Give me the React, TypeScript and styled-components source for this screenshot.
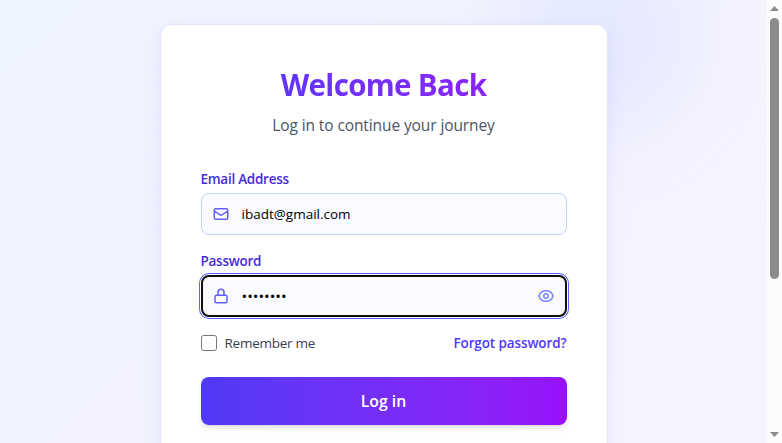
import React from "react";
import styled, { createGlobalStyle } from "styled-components";

const GlobalStyle = createGlobalStyle`
  * { box-sizing: border-box; }
  body { margin: 0; overflow: hidden; font-family: "Open Sans", "Noto Sans", sans-serif; }
`;

const Window = styled.div`
  display: flex;
  height: 443px;
  overflow: hidden;
`;

const Page = styled.main`
  position: relative;
  flex: 1;
  height: 697px;
  display: flex;
  justify-content: center;
  align-items: flex-start;
  padding-top: 24px;
  overflow: hidden;
  background: linear-gradient(to bottom right in oklab, #eef4ff, #f1f3ff 28%, #f5f3ff 55%, #faf5ff);
`;

const Glow = styled.div`
  position: absolute;
  top: -56px;
  left: 504px;
  width: 192px;
  height: 192px;
  border-radius: 50%;
  background: #c6d2ff;
  opacity: 0.28;
  filter: blur(36px);
`;

const Card = styled.form`
  position: relative;
  width: 448px;
  height: 649px;
  display: flex;
  flex-direction: column;
  padding: 40px;
  background: #fff;
  border: 1px solid #e0e7ff;
  border-radius: 12px;
  box-shadow: 0 10px 25px rgba(79, 57, 246, 0.05), 0 2px 10px rgba(79, 57, 246, 0.04);
`;

const Title = styled.h1`
  align-self: center;
  width: 366px;
  margin: 0;
  text-align: center;
  font-size: 29.5px;
  line-height: 40px;
  font-weight: 700;
  letter-spacing: -0.65px;
  color: transparent;
  background: linear-gradient(to right in oklab, #4f39f6, #9810fa);
  background-clip: text;
`;

const Subtitle = styled.p`
  margin: 8px 0 32px;
  text-align: center;
  font-size: 15.5px;
  line-height: 25px;
  height: 24px;
  letter-spacing: -0.1px;
  color: #4a5565;
`;

const Field = styled.div`
  display: flex;
  flex-direction: column;
  margin-bottom: 16px;
`;

const Label = styled.label`
  font-size: 13.5px;
  line-height: 20px;
  font-weight: 600;
  letter-spacing: -0.27px;
  color: #432dd7;
  margin-bottom: 4px;
`;

const InputBox = styled.div<{ $focused?: boolean }>`
  display: flex;
  align-items: center;
  height: 42px;
  padding: 0 11px 0 10px;
  gap: 12px;
  border-radius: 8px;
  border: 1px solid #c6d2ff;
  background: #f9fbff;
  color: #615fff;
  ${(p) =>
    p.$focused &&
    `border: 2px solid #101010; padding: 0 10px 0 9px; box-shadow: 0 0 0 1px #fff, 0 0 0 2px #615fff;`}
`;

const Input = styled.input`
  flex: 1;
  min-width: 0;
  height: 20px;
  padding: 0;
  border: 0;
  outline: 0;
  background: transparent;
  font: 13.5px "Open Sans", sans-serif;
  color: #000;
  &[type="password"] {
    font-size: 15px;
  }
`;

const Options = styled.div`
  display: flex;
  align-items: center;
  justify-content: space-between;
  height: 20px;
  margin-bottom: 24px;
  font-size: 13.5px;
`;

const Remember = styled.label`
  display: flex;
  align-items: center;
  gap: 8px;
  letter-spacing: -0.26px;
  color: #364153;
`;

const Checkbox = styled.input`
  appearance: none;
  width: 16px;
  height: 16px;
  margin: 0;
  border: 1px solid #767676;
  border-radius: 2.5px;
  background: #fff;
`;

const Forgot = styled.a`
  font-weight: 600;
  letter-spacing: -0.11px;
  color: #4f39f6;
`;

const Submit = styled.button`
  height: 48px;
  border: 0;
  border-radius: 8px;
  background: linear-gradient(to right in oklab, #4f39f6, #9810fa);
  box-shadow: 0 4px 6px -1px rgba(0, 0, 0, 0.1), 0 2px 4px -2px rgba(0, 0, 0, 0.1);
  color: #fff;
  font: 600 15.75px "Open Sans", sans-serif;
`;

const Scrollbar = styled.div`
  width: 15px;
  display: flex;
  flex-direction: column;
  align-items: center;
  padding: 6px 0 6px;
  background: #fcfcfc;
`;

const Thumb = styled.div`
  width: 9px;
  height: 261px;
  margin: 7px 0 auto;
  border-radius: 5px;
  background: #8b8b8b;
`;

const IconSvg = styled.svg<{ $muted?: boolean }>`
  flex: none;
  width: 18px;
  height: 18px;
  color: ${(p) => (p.$muted ? "#7c86ff" : "#615fff")};
`;

const Arrow = ({ down }: { down?: boolean }) => (
  <svg width="9" height="5" viewBox="0 0 9 5" fill="#8b8b8b">
    <path d={down ? "M0 0h9L4.5 5z" : "M0 5h9L4.5 0z"} />
  </svg>
);

const Icon = ({ paths, muted }: { paths: string[]; muted?: boolean }) => (
  <IconSvg $muted={muted} viewBox="0 0 24 24" fill="none" stroke="currentColor"
    strokeWidth="2" strokeLinecap="round" strokeLinejoin="round">
    {paths.map((d) => (
      <path key={d} d={d} />
    ))}
  </IconSvg>
);

const mail = [
  "M3 8l7.89 5.26a2 2 0 002.22 0L21 8M5 19h14a2 2 0 002-2V7a2 2 0 00-2-2H5a2 2 0 00-2 2v10a2 2 0 002 2z",
];
const lock = ["M6 21h12a2 2 0 002-2v-6a2 2 0 00-2-2H6a2 2 0 00-2 2v6a2 2 0 002 2zM16 11V7a4 4 0 00-8 0v4"];
const eye = [
  "M15 12a3 3 0 11-6 0 3 3 0 016 0z",
  "M2.458 12C3.732 7.943 7.523 5 12 5c4.478 0 8.268 2.943 9.542 7-1.274 4.057-5.064 7-9.542 7-4.477 0-8.268-2.943-9.542-7z",
];

export default function App() {
  return (
    <Window>
      <GlobalStyle />
      <Page>
        <Glow />
        <Card>
          <Title>Welcome Back</Title>
          <Subtitle>Log in to continue your journey</Subtitle>
          <Field>
            <Label htmlFor="email">Email Address</Label>
            <InputBox>
              <Icon paths={mail} />
              <Input id="email" type="email" defaultValue="ibadt@gmail.com" />
            </InputBox>
          </Field>
          <Field>
            <Label htmlFor="password">Password</Label>
            <InputBox $focused>
              <Icon paths={lock} />
              <Input id="password" type="password" defaultValue="abcdefgh" />
              <Icon paths={eye} muted />
            </InputBox>
          </Field>
          <Options>
            <Remember><Checkbox type="checkbox" />Remember me</Remember>
            <Forgot>Forgot password?</Forgot>
          </Options>
          <Submit type="button">Log in</Submit>
        </Card>
      </Page>
      <Scrollbar>
        <Arrow />
        <Thumb />
        <Arrow down />
      </Scrollbar>
    </Window>
  );
}
